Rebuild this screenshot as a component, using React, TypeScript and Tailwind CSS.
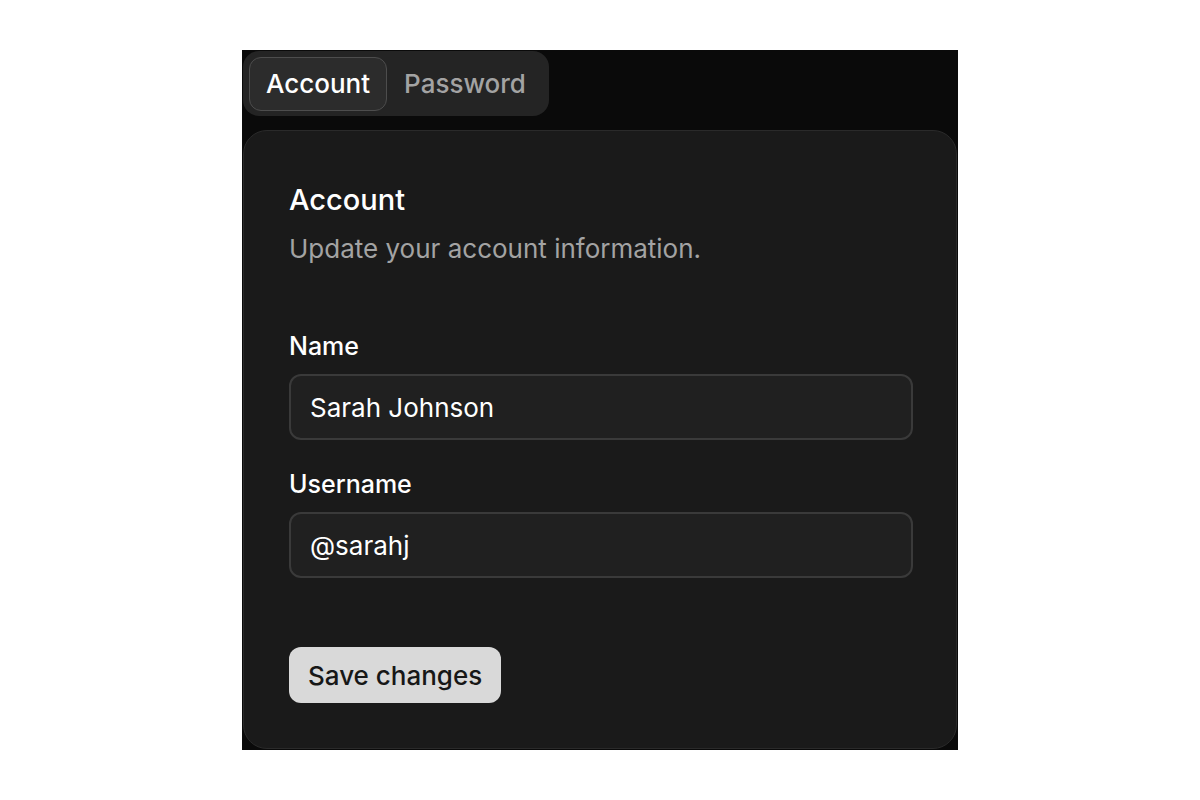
import React, { useState } from "react";

const App: React.FC = () => {
  const [tab, setTab] = useState("account");
  const [name, setName] = useState("Sarah Johnson");
  const [username, setUsername] = useState("@sarahj");

  return (
    <div className="min-h-screen bg-white flex justify-center pt-[50px]" style={{ fontFamily: "Inter, 'Noto Sans', sans-serif" }}>
      <div className="w-[716px] h-[700px] bg-[#0a0a0a] p-px flex flex-col gap-[14px]">
        {/* Tabs */}
        <div className="self-start flex items-center h-[65px] px-[6px] rounded-[16px] bg-[#242424]">
          {[
            { id: "account", label: "Account" },
            { id: "password", label: "Password" },
          ].map(t => (
            <button
              key={t.id}
              onClick={() => setTab(t.id)}
              className={`h-[54px] px-[16px] rounded-[12px] text-[26px] font-medium border ${
                tab === t.id ? "bg-[#2c2c2c] border-[#4d4d4d] text-white" : "border-transparent text-[#a3a3a3]"
              }`}
            >
              {t.label}
            </button>
          ))}
        </div>

        {/* Card */}
        <div className="flex-1 rounded-[24px] bg-[#1a1a1a] border border-[#2a2a2a] px-[45px] pt-[54px]">
          <h2 className="text-[29px] leading-none font-medium text-white">Account</h2>
          <p className="mt-[15px] text-[26px] text-[#a3a3a3]">Update your account information.</p>

          <div className="mt-[66px] flex flex-col gap-[32px]">
            <div className="flex flex-col gap-[15px]">
              <label className="text-[25px] font-medium text-white leading-none">Name</label>
              <input
                value={name}
                onChange={e => setName(e.target.value)}
                className="h-[66px] w-[624px] rounded-[12px] border-2 border-[#3a3a3a] bg-[#202020] px-[19px] text-[26px] text-white outline-none"
              />
            </div>
            <div className="flex flex-col gap-[15px]">
              <label className="text-[25px] font-medium text-white leading-none">Username</label>
              <input
                value={username}
                onChange={e => setUsername(e.target.value)}
                className="h-[66px] w-[624px] rounded-[12px] border-2 border-[#3a3a3a] bg-[#202020] px-[19px] text-[26px] text-white outline-none"
              />
            </div>
          </div>

          <button className="mt-[69px] h-[56px] px-[19px] rounded-[12px] bg-[#d9d9d9] text-[26px] font-medium text-[#171717]">
            Save changes
          </button>
        </div>
      </div>
    </div>
  );
};

export default App;
